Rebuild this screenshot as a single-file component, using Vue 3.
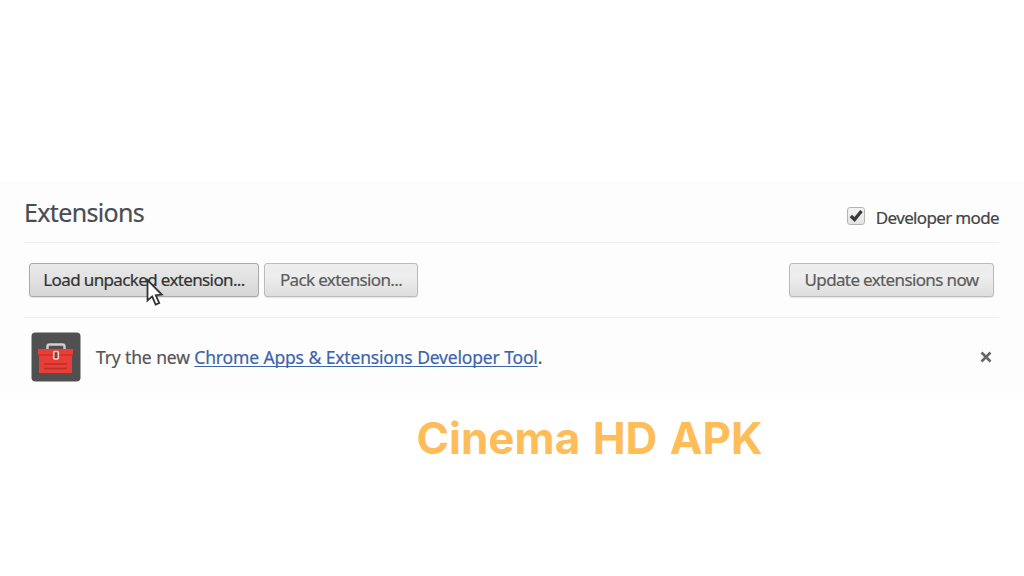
<template>
  <div class="page">
    <div class="panel">
      <header class="header">
        <h1>Extensions</h1>
        <label class="dev-mode" @click="devMode = !devMode">
          <span class="checkbox">
            <svg v-if="devMode" viewBox="0 0 18 18">
              <path d="M3.2 9 L7.4 13 L15.2 3.4" />
            </svg>
          </span>
          <span class="dev-label">Developer mode</span>
        </label>
      </header>

      <div class="toolbar">
        <button class="btn load">
          <span>Load unpacked extension...</span>
          <svg class="cursor" viewBox="0 0 18 30">
            <path d="M1.5 2 L1.5 22.5 L6.2 18.4 L9.6 26.6 L13.2 25 L9.8 17.2 L15.8 16.6 Z" />
          </svg>
        </button>
        <button class="btn pack"><span>Pack extension...</span></button>
        <button class="btn update"><span>Update extensions now</span></button>
      </div>

      <div v-if="showPromo" class="promo">
        <svg class="toolbox" viewBox="0 0 50 50">
          <rect x="0.5" y="0.5" width="49" height="49" rx="4" fill="#505050" />
          <path d="M16.5 17 V14.5 Q16.5 12.5 18.5 12.5 H31.5 Q33.5 12.5 33.5 14.5 V17" fill="none" stroke="#d5d0d0" stroke-width="2.4" />
          <path d="M7 17 H42 V23 H41 V41 H8 V23 H7 Z" fill="#ea3d35" />
          <path d="M7 23 H42" stroke="#b32e2a" stroke-width="1.2" />
          <path d="M13 32 H36 M13 36.5 H36" stroke="#b92f2c" stroke-width="1.5" />
          <rect x="22.7" y="19.5" width="4.6" height="7.5" rx="1" fill="#8a3b32" stroke="#e5d5c5" stroke-width="1.6" />
        </svg>
        <p class="promo-text">
          Try the new <a href="#">Chrome Apps &amp; Extensions Developer Tool</a>.
        </p>
        <span class="close" @click="showPromo = false">
          <svg viewBox="0 0 12 12"><path d="M1.5 1.5 L10.5 10.5 M10.5 1.5 L1.5 10.5" /></svg>
        </span>
      </div>
    </div>
    <div class="caption">Cinema HD APK</div>
  </div>
</template>

<script setup>
import { ref } from 'vue';

const devMode = ref(true);
const showPromo = ref(true);
</script>

<style>
body {
  margin: 0;
  background: #fff;
}
</style>

<style scoped>
.page {
  box-sizing: border-box;
  width: 1024px;
  height: 576px;
  padding-top: 181px;
  overflow: hidden;
  background: #fff;
  font-family: "Noto Sans", "Open Sans", sans-serif;
}

.panel {
  box-sizing: border-box;
  height: 217px;
  padding: 0 25px 0 24px;
  background: #fdfdfd;
  -webkit-text-stroke: 0.2px currentColor;
}

.header {
  display: flex;
  justify-content: space-between;
  box-sizing: border-box;
  height: 62px;
  border-bottom: 1px solid #f0f0f0;
}

h1 {
  margin: 14px 0 0;
  font-size: 25px;
  line-height: 34px;
  font-weight: 400;
  letter-spacing: -0.65px;
  color: #4a4d50;
}

.dev-mode {
  display: flex;
  align-items: center;
  height: 24px;
  margin-top: 24px;
  color: #444;
}

.checkbox {
  box-sizing: border-box;
  width: 18px;
  height: 18px;
  margin-right: 11px;
  position: relative;
  top: -1px;
  border: 1px solid #b5b5b5;
  border-radius: 3px;
  background: linear-gradient(#f3f3f3, #e3e3e3);
}

.checkbox svg {
  display: block;
  width: 16px;
  height: 16px;
}

.checkbox path {
  fill: none;
  stroke: #3a3a3a;
  stroke-width: 3.8;
}

.dev-label {
  font-size: 17px;
  letter-spacing: -0.65px;
}

.toolbar {
  display: flex;
  align-items: center;
  box-sizing: border-box;
  height: 75px;
  padding: 0 5px;
  gap: 5px;
  border-bottom: 1px solid #f0f0f0;
}

.btn {
  position: relative;
  box-sizing: border-box;
  height: 34px;
  padding: 0;
  border: 1.5px solid #bbb;
  border-radius: 3px;
  background: linear-gradient(#eee, #ededed 40%, #dedede);
  box-shadow: 0 1px 1px rgba(0, 0, 0, 0.1);
  font-family: inherit;
  font-size: 17px;
  line-height: 24px;
  letter-spacing: -0.63px;
  color: #5c5c5c;
  white-space: nowrap;
}

.load {
  width: 230px;
  border-color: #aaa;
  background: linear-gradient(#e9e9e9, #e3e3e3 40%, #d6d6d6);
  color: #333;
}

.pack {
  width: 154px;
}

.update {
  width: 205px;
  margin-left: auto;
}

/* mouse pointer resting on the first button */
.cursor {
  position: absolute;
  left: 116px;
  top: 14px;
  width: 18px;
  height: 30px;
}

.cursor path {
  fill: #fff;
  stroke: #333;
  stroke-width: 1.8;
}

.promo {
  display: flex;
  align-items: center;
  height: 78px;
  padding-left: 7px;
}

.toolbox {
  width: 50px;
  height: 50px;
}

.promo-text {
  margin: 0 0 0 15px;
  font-size: 17.5px;
  letter-spacing: -0.18px;
  word-spacing: 0.25px;
  color: #555;
  white-space: nowrap;
}

a {
  color: #3c64ac;
  text-decoration: underline;
  text-decoration-thickness: 1px;
  text-decoration-skip-ink: none;
  text-underline-offset: 2px;
}

.close {
  display: flex;
  margin-left: auto;
  margin-right: 7px;
  cursor: pointer;
}

.close svg {
  width: 12px;
  height: 12px;
}

.close path {
  stroke: #666;
  stroke-width: 2.6;
}

.caption {
  margin: 12px 0 0 416.5px;
  font-family: Inter, sans-serif;
  font-size: 44px;
  line-height: 56px;
  font-weight: 700;
  word-spacing: 2px;
  color: #ffbd59;
  white-space: nowrap;
}
</style>
